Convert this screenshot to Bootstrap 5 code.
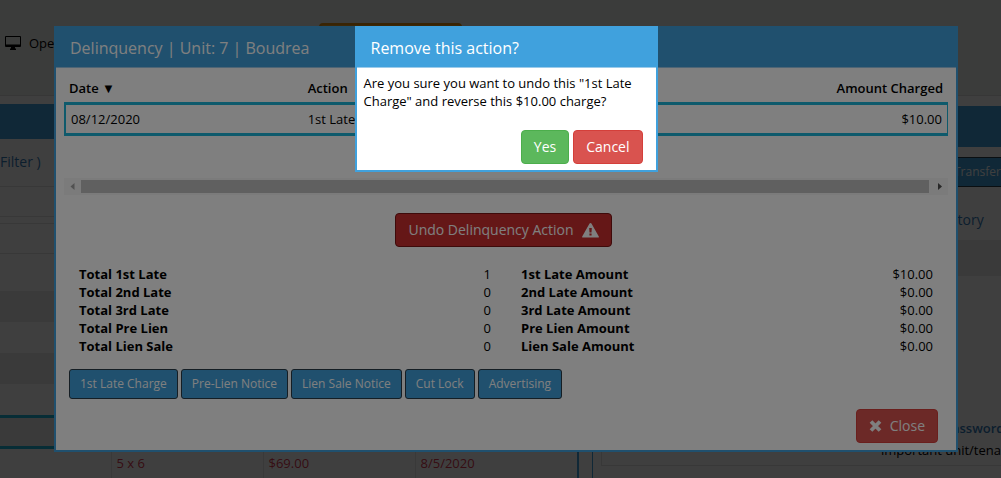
<!DOCTYPE html>
<html lang="en">
<head>
<meta charset="utf-8">
<meta name="viewport" content="width=device-width, initial-scale=1">
<title>Delinquency</title>
<link href="https://cdn.jsdelivr.net/npm/bootstrap@5.3.0/dist/css/bootstrap.min.css" rel="stylesheet">
<style>
  :root { --blue: #40a1dd; --teal: #1cb4d8; }
  body { font: 13px/18px "Open Sans", sans-serif; color: #000; height: 100vh; overflow: hidden; background: #fff; }
  a { color: #337ab7; text-decoration: none; }
  .btn { font-family: inherit; --bs-btn-border-radius: 4px; white-space: nowrap; }

  /* page underneath */
  .topbar { height: 96px; background: #eef1ee; border-bottom: 1px solid #dcdfdc; padding: 20px 0 0 5px; }
  .topbar a { padding-top: 14px; }
  .topbar svg { margin-top: 2px; }
  .notice-tab { height: 30px; margin-left: 257px; width: 143px; background: #f0a020; border-radius: 4px; border: 2px solid #e69010; margin-top: 3px; }
  .pane-left { flex: 0 0 579px; border-right: 2px solid var(--blue); margin-top: 8px; }
  .pane-right { border-left: 1px solid var(--blue); margin: 10px 0 0 13px; min-width: 0; white-space: nowrap; }
  .bar { background: var(--blue); }
  .pane-left .bar { height: 35px; }
  .pane-right .bar { height: 41px; }
  .filter-line { height: 48px; padding-top: 14px; font-size: 14px; }
  .stripe { background: #eaeaea; }
  .rule { border-bottom: 1px solid #e0e0e0; }
  .line { height: 31px; }
  .line.rule { height: 30px; }
  .gap-line { height: 7px; }
  .tall-line { height: 37px; }
  .picked { border-top: 3px solid var(--teal); border-bottom: 3px solid var(--teal); background: #eaeaea; height: 34px; }
  .units { table-layout: fixed; width: 100%; }
  .units td { border-left: 1px solid #e4e4e4; padding: 5px; height: 34px; color: #d9364f; width: 152px; vertical-align: top; }
  .units td:first-child { width: 111px; border: 0; }
  .units td:last-child { width: auto; }
  .pane-right .tools { padding: 10px 0 0 350px; height: 61px; }
  .pane-right .history { padding: 3px 0 0 344px; font-size: 14px; height: 32px; }
  .pane-right .stripe { height: 36px; }
  .memo { margin: 64px 0 0 8px; border: solid #e0e0e0; border-width: 0 0 1px 1px; padding: 79px 0 6px 279px; }
  .memo a { font-weight: 600; padding-left: 63px; }

  /* stacked dialogs */
  .layer { position: fixed; inset: 0; padding: 26px 43px 0 54px; background: rgba(0,0,0,.5); }
  .dlg { background: #fff; border: 2px solid var(--blue); }
  .dlg-head { background: var(--blue); color: #fff; font-size: 16px; line-height: 24px; padding: 8px 14px 7px; border-bottom: 1px solid #9ccbea; font-weight: 400; margin: 0; }
  .ledger { width: 100%; border-collapse: separate; border-spacing: 0; }
  .ledger th { font-weight: 600; padding: 11px 5px 5px; }
  .ledger td { border: solid var(--teal); border-width: 3px 0; padding: 5px; height: 34px; }
  .ledger th:first-child { width: 27%; }
  .ledger td:first-child { border-left-width: 2px; }
  .ledger td:last-child { border-right-width: 1px; }
  .scroller { height: 17px; background: #f6f6f6; margin-top: 42px; }
  .scroller svg { flex: 0 0 17px; }
  .scroller svg:last-child { flex-basis: 19px; }
  .thumb { height: 13px; background: #c1c1c1; }
  .btn-md { font-size: 14px; line-height: 20px; padding: 6px 12px; }
  .undo-row { padding: 18px 5px 0 0; }
  .btn-undo { --bs-btn-bg: #cb2f2f; --bs-btn-color: #fff; --bs-btn-border-color: #7c1414; }
  .btn-stop { --bs-btn-bg: #d9534f; --bs-btn-color: #fff; --bs-btn-border-color: #d43f3a; }
  .btn-yes { --bs-btn-bg: #5cb85c; --bs-btn-color: #fff; --bs-btn-border-color: #4cae4c; }
  .btn-tool { --bs-btn-bg: var(--blue); --bs-btn-color: #fff; --bs-btn-border-color: #2a3c48; --bs-btn-border-radius: 3px; font-size: 12px; line-height: 18px; padding: 5px 10px; }
  .totals { table-layout: fixed; width: 100%; margin-top: 18px; }
  .totals td, .totals th { padding: 0; }
  .totals th { font-weight: 700; }
  .totals td { padding-right: 15px; text-align: right; }
  .totals th { padding-left: 15px; }
  .toolrow { gap: 3px; padding: 14px 5px 10px; }
  .foot { padding: 0 10px 7px; }
  .confirm { width: 303px; }
  .confirm p { padding: 6px 7px 20px; margin: 0; }
  .confirm .foot { padding: 0 13px 6px; }
</style>
</head>
<body>
<div class="topbar d-flex align-items-start">
  <a class="d-flex align-items-start text-black" href="#"><svg width="16" height="14" viewBox="0 0 16 14" class="me-2"><path fill-rule="evenodd" d="M1 0h14q1 0 1 1v9q0 1-1 1h-5v1l1 1v1H5v-1l1-1v-1H1q-1 0-1-1V1q0-1 1-1Zm0 1v7.500h14V1Z"/></svg>Open</a>
  <div class="notice-tab"></div>
</div>
<main class="d-flex">
  <section class="pane-left">
    <div class="bar"></div>
    <div class="filter-line rule"><a href="#">Filter )</a></div>
    <div class="line rule"></div>
    <div class="gap-line rule"></div>
    <div class="line rule"></div>
    <div class="tall-line"></div>
    <div class="line stripe"></div>
    <div class="line"></div>
    <div class="line stripe"></div>
    <div class="line"></div>
    <div class="picked"></div>
    <table class="units"><tbody><tr><td></td><td>5 x 6</td><td>$69.00</td><td>8/5/2020</td></tr></tbody></table>
  </section>
  <section class="pane-right flex-grow-1">
    <div class="bar"></div>
    <div class="tools"><button type="button" class="btn btn-tool">Transfer</button></div>
    <div class="history"><a href="#">History</a></div>
    <div class="stripe"></div>
    <div class="memo">
      <a href="#">Password</a>
      <div class="pt-1">important unit/tena</div>
    </div>
  </section>
</main>

<div class="layer">
  <div class="dlg" role="dialog" aria-labelledby="dlq-title">
    <h1 class="dlg-head" id="dlq-title">Delinquency | Unit: 7 | Boudrea</h1>
    <div class="px-2">
      <table class="ledger">
        <thead><tr><th>Date ▼</th><th>Action</th><th class="text-end">Amount Charged</th></tr></thead>
        <tbody><tr><td>08/12/2020</td><td>1st Late Charge</td><td class="text-end">$10.00</td></tr></tbody>
      </table>
      <div class="scroller d-flex align-items-center">
        <svg width="17" height="17"><path d="M10.500 5v7L6.500 8.500Z" fill="#a3a3a3"/></svg>
        <div class="thumb flex-grow-1"></div>
        <svg width="19" height="17"><path d="M9 5v7l4-3.500Z" fill="#505050"/></svg>
      </div>
      <div class="undo-row text-center">
        <button type="button" class="btn btn-md btn-undo d-inline-flex align-items-center">Undo Delinquency Action
          <svg class="ms-2" width="17" height="15" viewBox="0 0 17 15"><path fill="#fff" fill-rule="evenodd" d="M8.500 0q.7 0 1.100.8l7.200 12.600q.4 1.100-.8 1.200H1q-1.200-.1-.8-1.200L7.400.8q.4-.8 1.100-.8ZM7.200 5l.3 4.500h2L9.800 5Zm.2 5.600v2h2.200v-2Z"/></svg>
        </button>
      </div>
      <table class="totals">
        <tbody>
          <tr><th scope="row">Total 1st Late</th><td>1</td><th scope="row">1st Late Amount</th><td>$10.00</td></tr>
          <tr><th scope="row">Total 2nd Late</th><td>0</td><th scope="row">2nd Late Amount</th><td>$0.00</td></tr>
          <tr><th scope="row">Total 3rd Late</th><td>0</td><th scope="row">3rd Late Amount</th><td>$0.00</td></tr>
          <tr><th scope="row">Total Pre Lien</th><td>0</td><th scope="row">Pre Lien Amount</th><td>$0.00</td></tr>
          <tr><th scope="row">Total Lien Sale</th><td>0</td><th scope="row">Lien Sale Amount</th><td>$0.00</td></tr>
        </tbody>
      </table>
      <div class="toolrow d-flex">
        <button type="button" class="btn btn-tool">1st Late Charge</button>
        <button type="button" class="btn btn-tool">Pre-Lien Notice</button>
        <button type="button" class="btn btn-tool">Lien Sale Notice</button>
        <button type="button" class="btn btn-tool">Cut Lock</button>
        <button type="button" class="btn btn-tool">Advertising</button>
      </div>
      <div class="foot d-flex justify-content-end">
        <button type="button" class="btn btn-md btn-stop d-inline-flex align-items-center"><svg class="me-2" width="13" height="12" viewBox="0 0 13 12"><path d="M2 1.500l9 9M11 1.500l-9 9" stroke="#fff" stroke-width="3.800"/></svg>Close</button>
      </div>
    </div>
  </div>
</div>

<div class="layer">
  <div class="dlg confirm mx-auto" role="alertdialog" aria-labelledby="confirm-title">
    <h2 class="dlg-head" id="confirm-title">Remove this action?</h2>
    <p>Are you sure you want to undo this "1st Late Charge" and reverse this $10.00 charge?</p>
    <div class="foot d-flex justify-content-end gap-1">
      <button type="button" class="btn btn-md btn-yes">Yes</button>
      <button type="button" class="btn btn-md btn-stop">Cancel</button>
    </div>
  </div>
</div>
<script src="https://cdn.jsdelivr.net/npm/bootstrap@5.3.0/dist/js/bootstrap.bundle.min.js"></script>
</body>
</html>
